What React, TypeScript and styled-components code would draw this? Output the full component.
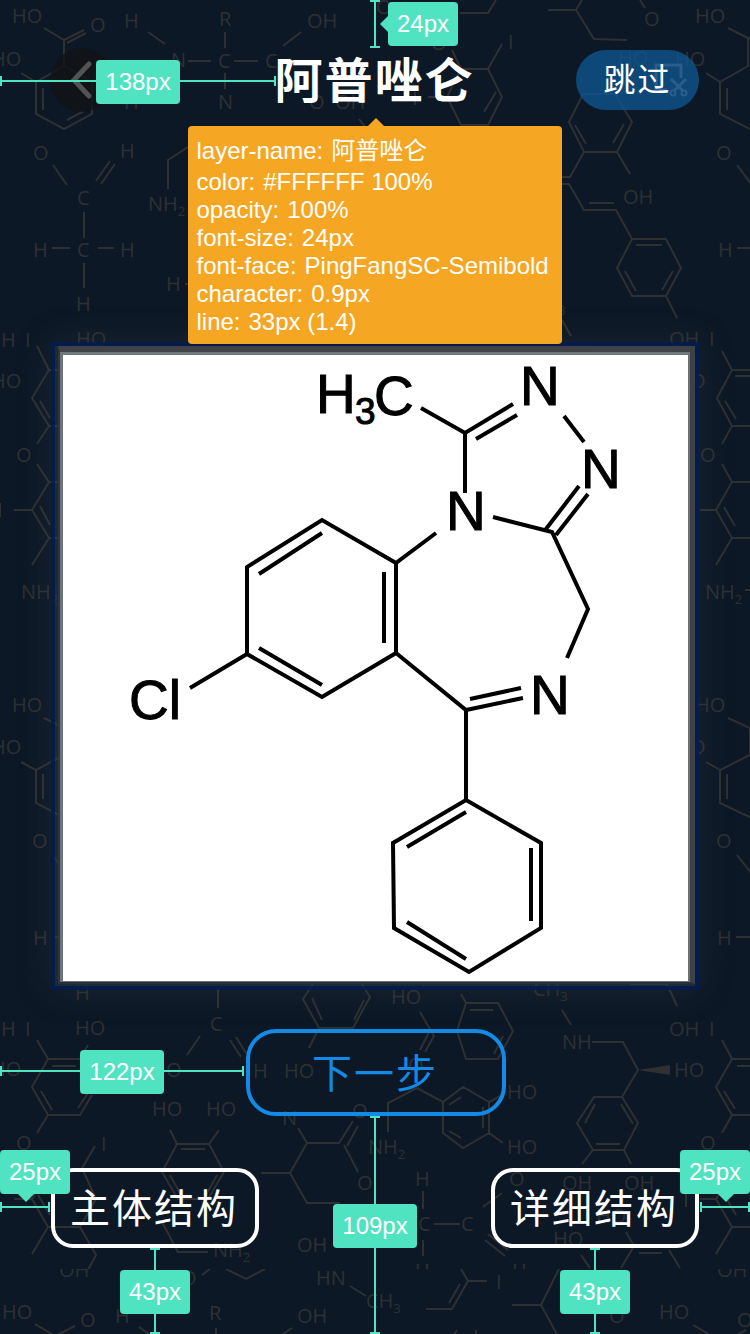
import React from "react";
import styled, { createGlobalStyle, css } from "styled-components";

const GlobalStyle = createGlobalStyle`
  *, *::before, *::after { box-sizing: border-box; }
  body { margin: 0; background: #0c1826; }
  button { font: inherit; cursor: pointer; }
`;

const cjk = `"Liberation Sans", "Noto Sans CJK SC", sans-serif`;
const mint = "#50e3c2";
const amber = "#f5a623";
const ink = "#2f3032";

const Page = styled.main`
  position: relative;
  display: flex;
  flex-direction: column;
  min-height: 100vh;
  overflow: hidden;
  background: #0c1826;
  color: #fff;
  font-family: ${cjk};
`;

const Backdrop = styled.svg`
  position: absolute;
  inset: 0;
  width: 100%;
  height: 100%;
  font-family: "Open Sans", "Noto Sans", sans-serif;
  font-size: 20px;
`;

const TopBar = styled.header`
  position: relative;
  z-index: 2;
  display: grid;
  grid-template-columns: 1fr auto 1fr;
  align-items: center;
  padding: 47px 51px 0 50px;
`;

const BackButton = styled.button`
  display: grid;
  place-items: center;
  width: 64px;
  height: 64px;
  padding: 0;
  border: 0;
  border-radius: 50%;
  background: rgba(18, 18, 20, 0.75);
`;

const TitleBox = styled.div`
  position: relative;
`;

const Title = styled.h1`
  height: 66px;
  margin: 0;
  padding-top: 2px;
  font-size: 48px;
  line-height: 66px;
  font-weight: 700;
  letter-spacing: 2px;
`;

const SkipButton = styled.button`
  position: relative;
  justify-self: end;
  width: 123px;
  height: 60px;
  padding: 0;
  border: 0;
  border-radius: 30px;
  background: rgba(14, 88, 150, 0.75);
  color: #fff;
  font-size: 32px;
  line-height: 60px;
  font-weight: 400;
  letter-spacing: 2px;
`;

const SkipLabel = styled.span`
  position: relative;
`;

const CropMark = styled.svg`
  position: absolute;
  top: 12px;
  right: 10px;
`;

const Popover = styled.dl`
  position: absolute;
  top: calc(100% + 13px);
  left: 50%;
  width: 374px;
  margin: 0 0 0 -186px;
  padding: 8px;
  border-radius: 4px;
  background: ${amber};
  font-size: 24px;
  line-height: 28px;
  white-space: nowrap;

  &::before {
    content: "";
    position: absolute;
    left: 50%;
    bottom: 100%;
    margin-left: -7px;
    border: solid transparent;
    border-width: 0 8px 8px;
    border-bottom-color: ${amber};
  }
`;

const Spec = styled.div<{ $tall?: boolean }>`
  display: flex;
  gap: 8px;
  line-height: ${(p) => (p.$tall ? 34 : 28)}px;

  dt, dd { margin: 0; }
`;

const Frame = styled.figure`
  position: relative;
  margin: 229px 51px 0;
  padding: 0 0 2px 3px;
  border: 4px solid rgba(2, 26, 78, 0.85);
  background: rgba(40, 62, 76, 0.5);
  box-shadow: 0 0 32px rgba(70, 76, 80, 0.26);
`;

const Bevel = styled.div`
  border: solid;
  border-width: 6px 5px 2px 2px;
  border-color: #3f4347 #3d4246 #26303a #2f3335;
`;

const Paper = styled.div`
  border: solid;
  border-width: 3px 2px 1px 3px;
  border-color: #70777f #6f7071 #6f7071 #6c7379;
  background: #fff;
`;

const Molecule = styled.svg`
  display: block;
  width: 100%;
  height: auto;
  font-family: "Liberation Sans", sans-serif;
  font-size: 55px;
`;

const Actions = styled.section`
  position: relative;
  flex: 1;
  margin-top: 39px;
`;

const NextRow = styled.div`
  position: relative;
  display: flex;
  justify-content: center;
  padding-left: 2px;
`;

const ModeRow = styled.div`
  position: relative;
  display: flex;
  justify-content: space-between;
  margin-top: 52px;
  padding: 0 51px 86px;
`;

const ModeBox = styled.div`
  position: relative;
`;

const OutlineButton = styled.button<{ $primary?: boolean }>`
  display: block;
  width: ${(p) => (p.$primary ? 260 : 208)}px;
  height: ${(p) => (p.$primary ? 87 : 80)}px;
  padding: 0 2px 4px 0;
  border: 4px solid ${(p) => (p.$primary ? "#128ae6" : "#fff")};
  border-radius: ${(p) => (p.$primary ? 30 : 22)}px;
  background: transparent;
  color: ${(p) => (p.$primary ? "#128ae6" : "#fff")};
  font-size: 40px;
  font-weight: 400;
  letter-spacing: 2px;
`;

const Ruler = styled.div<{
  $axis: "x" | "y";
  $top?: string;
  $bottom?: string;
  $left?: string;
  $right?: string;
  $length?: string;
}>`
  position: absolute;
  z-index: 3;
  display: flex;
  align-items: center;
  justify-content: center;
  top: ${(p) => p.$top ?? "auto"};
  bottom: ${(p) => p.$bottom ?? "auto"};
  left: ${(p) => p.$left ?? "auto"};
  right: ${(p) => p.$right ?? "auto"};
  border: 0 solid ${mint};

  &::before {
    content: "";
    position: absolute;
    background: ${mint};
  }

  ${(p) =>
    p.$axis === "x"
      ? css`
          width: ${p.$length};
          height: 10px;
          padding-top: 2px;
          border-width: 0 2px;
          &::before { top: 4px; left: 0; right: 0; height: 2px; }
        `
      : css`
          width: 10px;
          height: ${p.$length ?? "auto"};
          margin-left: -5px;
          padding-top: 2px;
          border-width: 2px 0;
          &::before { left: 4px; top: 0; bottom: 0; width: 2px; }
        `}
`;

const Tag = styled.span<{ $place?: "beside" | "aboveStart" | "aboveEnd" }>`
  position: relative;
  flex: none;
  padding: 0 9px;
  border-radius: 4px;
  background: ${mint};
  color: #fff;
  font-size: 24px;
  line-height: 44px;
  white-space: nowrap;

  ${(p) =>
    p.$place &&
    css`
      position: absolute;
      &::after {
        content: "";
        position: absolute;
        border: 8px solid transparent;
      }
    `}

  ${(p) =>
    p.$place === "beside" &&
    css`
      left: 18px;
      top: 0;
      &::after { right: 100%; top: 14px; border-left-width: 0; border-right-color: ${mint}; }
    `}

  ${(p) =>
    p.$place === "aboveStart" &&
    css`
      left: -2px;
      bottom: 18px;
      &::after { top: 100%; left: 18px; border-bottom-width: 0; border-top-color: ${mint}; }
    `}

  ${(p) =>
    p.$place === "aboveEnd" &&
    css`
      right: -2px;
      bottom: 18px;
      &::after { top: 100%; right: 16px; border-bottom-width: 0; border-top-color: ${mint}; }
    `}
`;

type Label = [text: string, x: number, y: number, sub?: string];

const upperLabels: Label[] = [
  ["HO", 12, 23], ["O", 90, 32], ["H", 124, 28], ["R", 219, 26], ["OH", 307, 28],
  ["HO", -9, 66], ["N", 171, 67], ["C", 218, 68], ["C", 265, 68], ["N", 218, 109],
  ["H", 124, 109], ["O", 309, 109], ["OH", 335, 109], ["O", 33, 160], ["H", 120, 158],
  ["C", 77, 205], ["NH", 148, 211, "2"], ["H", 33, 257], ["C", 77, 257], ["H", 120, 257],
  ["H", 76, 311], ["H", 166, 291], ["H", 1, 347], ["I", 25, 347], ["HO", 76, 346],
  ["O", 376, 14], ["O", 431, 50], ["I", 508, 49], ["O", 644, 26], ["HO", 695, 23],
  ["HO", 618, 65], ["HO", 675, 66], ["OH", 623, 204], ["O", 716, 160], ["H", 718, 257],
  ["OH", 669, 346], ["I", 709, 346], ["CH", 531, 310, "3"], ["NH", 563, 358],
  ["HO", -9, 388], ["O", 16, 462], ["NH", 21, 599, "2"], ["HO", 12, 712], ["HO", -9, 754],
  ["O", 32, 848], ["H", 33, 945], ["O", 690, 388], ["O", 700, 462], ["NH", 705, 599, "2"],
  ["HO", 695, 712], ["O", 690, 754], ["O", 716, 848], ["H", 717, 945],
  ["H", 75, 1000], ["H", 1, 1036], ["I", 25, 1036], ["HO", 75, 1035], ["C", 210, 1031],
  ["H", 253, 1078], ["HO", 284, 1078], ["O", 166, 1077], ["HO", -9, 1076], ["HO", 152, 1116],
  ["HO", 206, 1116], ["O", 16, 1150], ["I", 101, 1151], ["NH", 213, 1257, "2"], ["N", 282, 1125],
  ["O", 352, 1118], ["O", 357, 1190], ["OH", 297, 1252], ["HO", 391, 1004], ["O", 408, 1072],
  ["HO", 507, 1099], ["HO", 507, 1154], ["NH", 368, 1154, "2"], ["CH", 533, 996, "3"],
  ["NH", 562, 1049], ["HO", 674, 1077], ["OH", 669, 1036], ["I", 709, 1036], ["O", 700, 1150],
  ["H", 415, 1186], ["C", 418, 1231], ["C", 461, 1231], ["H", 415, 1278], ["H", 512, 1278],
  ["O", 509, 1186], ["OH", 562, 1190], ["OH", 624, 1190], ["HO", 553, 1246], ["HO", 596, 1223],
];

const lowerLabels: Label[] = [
  ["OH", 59, 1277], ["O", 181, 1285], ["HN", 316, 1285], ["CH", 366, 1308, "3"],
  ["OH", 297, 1323], ["HO", 2, 1319], ["O", 80, 1327], ["H", 115, 1323], ["R", 209, 1320],
  ["I", 496, 1289], ["HO", 659, 1319], ["O", 737, 1327], ["O", 609, 1323], ["OH", 717, 1277],
];

const upperBonds = [
  "M44 28 64 40 84 30M67 43 86 33M64 40V66L36 82 21 73M36 82V114L64 129 92 114V82L64 66M43 88V110M67 120 84 111",
  "M148 32 165 44M225 32V48M188 61H211M234 61H258M225 73V89M283 46 301 32",
  "M53 165 67 185M96 181 110 161M101 184 115 164M84 212V238M52 248H70M98 248H114M84 263V288",
  "M168 189V160L188 147M359 119 375 140M185 284H192",
  "M460 13H488L496 0M452 50 461 69H488L502 44M488 69 502 97 488 125H461L447 97 461 69M484 112 496 92M428 97H447M415 92V105",
  "M548 10H576L582 0M576 10 594 39 627 40M640 0 645 8",
  "M583 94H615L632 122 617 152H584L569 122ZM575 125 586 144M624 124 613 143M617 152 630 174M584 152 570 177H562",
  "M562 184H569L584 210H616L632 239H666L681 268 666 296H632L617 268 632 239M589 203H614M636 245H662M625 271 636 291M673 271 662 290M666 296 677 318M562 320 571 336",
  "M728 28 748 38H752M748 38V66L720 82V114L752 130M727 88V110M706 73 720 82M737 165 752 185M737 248H752",
  "M37 346 49 370 32 398 49 426 37 444M40 401 50 418M49 370H62M49 426H62",
  "M37 464 49 482 32 510 49 538 32 565M40 506 50 525M14 510H32M49 482H62M49 538H62M0 503V517",
  "M44 718 62 727M21 762 36 770V803L63 817M36 770 62 756M43 774V799M54 857 63 868M54 937H63",
  "M722 351 732 370 717 398 732 426 722 444M725 401 736 419M732 370H752M732 426H752M735 376H752",
  "M722 464 732 482 716 510 732 538 716 565M700 510H716M732 482H752M732 538H752M724 507 735 526M745 590H752",
  "M728 718 750 728V755L720 770V803L752 818M706 762 720 770M727 774V799M737 855 752 874M736 937H752",
  "M218 988V1008M200 1036 187 1055M230 1040 241 1057M236 1037 246 1053",
  "M313 984 303 999 319 1028H353L370 997 362 984M312 998 322 1020M364 1000 354 1020M319 1028 309 1048",
  "M37 1040 48 1059H80L88 1045M48 1059 32 1087 48 1115H80L92 1095M52 1066H76M41 1091 52 1110M78 1108 90 1090M48 1115 37 1133",
  "M95 1146 82 1168 96 1199 80 1227H48L32 1254M80 1227 96 1255 88 1270M14 1199H32L48 1227M32 1199 48 1170H82M38 1195 50 1215",
  "M170 1130 177 1144H209L219 1130M209 1144 224 1172 208 1199H178L162 1172 177 1144M181 1149H205M170 1175 181 1195M217 1175 206 1195M162 1222 178 1252H208",
  "M298 1128 307 1143H339L353 1121M344 1145 358 1172M347 1146 358 1126M307 1143 290 1173 307 1203H340M261 1173H290",
  "M420 1012 434 1036 425 1052M429 1032 420 1050M461 994 466 1003H498L513 1031 498 1059H466L457 1031 466 1003M470 1010H493M494 1054 503 1036",
  "M388 1132V1103L417 1088 443 1102 463 1087 489 1102V1133L463 1148 443 1133V1102M449 1105 461 1097M483 1107V1128M461 1138 449 1131M489 1102 504 1094M489 1133 503 1143",
  "M562 1010 571 1025M592 1042H623L638 1070 622 1097H594L577 1123 593 1150H624L638 1123 622 1097M585 1123 595 1104M621 1104 633 1124M596 1144H620M593 1150 582 1164M624 1150 631 1164",
  "M630 984H667L677 1006M722 1040 732 1059H752M732 1059 716 1087 732 1115H752M737 1066H752M724 1091 735 1109M732 1115 722 1133",
  "M423 1191V1209M434 1224H460M423 1240V1256M485 1240 505 1256M488 1234 508 1250M483 1207 502 1193",
  "M626 1232 634 1246 621 1268M639 1253H662M669 1250 680 1268M581 1255 590 1268M686 1193V1207M700 1199H716L732 1227 716 1254M716 1199 732 1171M732 1227H752M725 1196 736 1215",
].join("");

const lowerBonds = [
  "M202 1275 210 1269M226 1269 246 1279 265 1269M350 1286 366 1296",
  "M35 1324 55 1336 75 1326M139 1327 152 1336M216 1328V1336M280 1336 292 1328",
  "M461 1269 468 1281H487M468 1281 452 1309H426M460 1284 449 1303M453 1336 457 1330M476 1330V1336",
  "M559 1269 541 1305 559 1338M512 1305H541M693 1325 712 1336M735 1336 746 1330",
].join("");

function Labels({ items }: { items: Label[] }) {
  return (
    <>
      {items.map(([text, x, y, sub], i) => (
        <text key={i} x={x} y={y}>
          {text}
          {sub && <tspan dy="5" fontSize="13">{sub}</tspan>}
        </text>
      ))}
    </>
  );
}

function FormulaBackdrop() {
  return (
    <Backdrop viewBox="0 0 750 1334" preserveAspectRatio="xMidYMin slice" aria-hidden="true">
      <defs>
        <clipPath id="upper"><rect width="750" height="1269" /></clipPath>
        <clipPath id="lower"><rect y="1269" width="750" height="65" /></clipPath>
      </defs>
      <g clipPath="url(#upper)" fill={ink}>
        <Labels items={upperLabels} />
        <path d={upperBonds} fill="none" stroke={ink} strokeWidth="2" />
        <path d="M638 1070 670 1065V1075Z" />
      </g>
      <g clipPath="url(#lower)" fill={ink}>
        <Labels items={lowerLabels} />
        <path d={lowerBonds} fill="none" stroke={ink} strokeWidth="2" />
      </g>
    </Backdrop>
  );
}

const bonds = [
  "M421 408 465 433 513 404M476 439 517 415M465 433V493",
  "M564 416 584 442M579 486 546 529M588 494 556 535M493 517 552 532 588 609 567 658",
  "M436 533 396 563V653L322 697 247 654V567L322 520 396 563M384 572V643M322 533 259 574M259 648 322 685M247 654 190 688",
  "M396 653 466 710 523 698M470 699 521 688M466 710V800",
  "M466 800 541 843V928L469 972 394 928 393 843ZM531 848V921M407 847 466 812M407 922 466 959",
].join("");

function Alprazolam() {
  return (
    <Molecule viewBox="63 355 625 626" role="img" aria-label="阿普唑仑">
      <path d={bonds} fill="none" stroke="#000" strokeWidth="4" />
      <g stroke="#000" strokeWidth="1">
        <text x="316" y="413">H</text>
        <text x="355" y="424" fontSize="37">3</text>
        <text x="374" y="415">C</text>
        <text x="520" y="405">N</text>
        <text x="581" y="488">N</text>
        <text x="446" y="530">N</text>
        <text x="530" y="714">N</text>
        <text x="129" y="719">Cl</text>
      </g>
    </Molecule>
  );
}

const specs: [string, string][] = [
  ["layer-name", "阿普唑仑"],
  ["color", "#FFFFFF 100%"],
  ["opacity", "100%"],
  ["font-size", "24px"],
  ["font-face", "PingFangSC-Semibold"],
  ["character", "0.9px"],
  ["line", "33px (1.4)"],
];

export default function App() {
  return (
    <Page>
      <GlobalStyle />
      <FormulaBackdrop />

      <TopBar>
        <BackButton type="button" aria-label="返回">
          <svg width="40" height="40" viewBox="0 0 40 40" fill="none" stroke="#535353" strokeWidth="5" strokeLinecap="round">
            <path d="M27 4 12 20 27 36" />
          </svg>
        </BackButton>
        <TitleBox>
          <Title>阿普唑仑</Title>
          <Popover>
            {specs.map(([name, value], i) => (
              <Spec key={name} $tall={i === 0}>
                <dt>{name}:</dt>
                <dd>{value}</dd>
              </Spec>
            ))}
          </Popover>
        </TitleBox>
        <SkipButton type="button">
          <CropMark width="36" height="36" viewBox="0 0 36 36" fill="none" stroke="#2a5d8b" strokeWidth="3" aria-hidden="true">
            <path d="M3 30V3H28V16M3 28H14" />
            <path d="M18 17 30 29M33 17 21 29" />
            <circle cx="20" cy="31" r="2.5" strokeWidth="2" />
            <circle cx="31" cy="31" r="2.5" strokeWidth="2" />
          </CropMark>
          <SkipLabel>跳过</SkipLabel>
        </SkipButton>
        <Ruler $axis="y" $top="0" $left="50%" $length="48px">
          <Tag $place="beside">24px</Tag>
        </Ruler>
        <Ruler $axis="x" $top="76px" $left="0" $length="calc(50% - 99px)">
          <Tag>138px</Tag>
        </Ruler>
      </TopBar>

      <Frame>
        <Bevel>
          <Paper>
            <Alprazolam />
          </Paper>
        </Bevel>
      </Frame>

      <Actions>
        <NextRow>
          <OutlineButton type="button" $primary>下一步</OutlineButton>
          <Ruler $axis="x" $top="37px" $left="0" $length="calc(50% - 131px)">
            <Tag>122px</Tag>
          </Ruler>
        </NextRow>
        <ModeRow>
          <ModeBox>
            <OutlineButton type="button">主体结构</OutlineButton>
            <Ruler $axis="y" $top="100%" $left="50%" $length="86px">
              <Tag>43px</Tag>
            </Ruler>
          </ModeBox>
          <ModeBox>
            <OutlineButton type="button">详细结构</OutlineButton>
            <Ruler $axis="y" $top="100%" $left="50%" $length="86px">
              <Tag>43px</Tag>
            </Ruler>
          </ModeBox>
          <Ruler $axis="x" $top="34px" $left="0" $length="50px">
            <Tag $place="aboveStart">25px</Tag>
          </Ruler>
          <Ruler $axis="x" $top="34px" $right="0" $length="50px">
            <Tag $place="aboveEnd">25px</Tag>
          </Ruler>
        </ModeRow>
        <Ruler $axis="y" $top="87px" $bottom="0" $left="50%">
          <Tag>109px</Tag>
        </Ruler>
      </Actions>
    </Page>
  );
}
